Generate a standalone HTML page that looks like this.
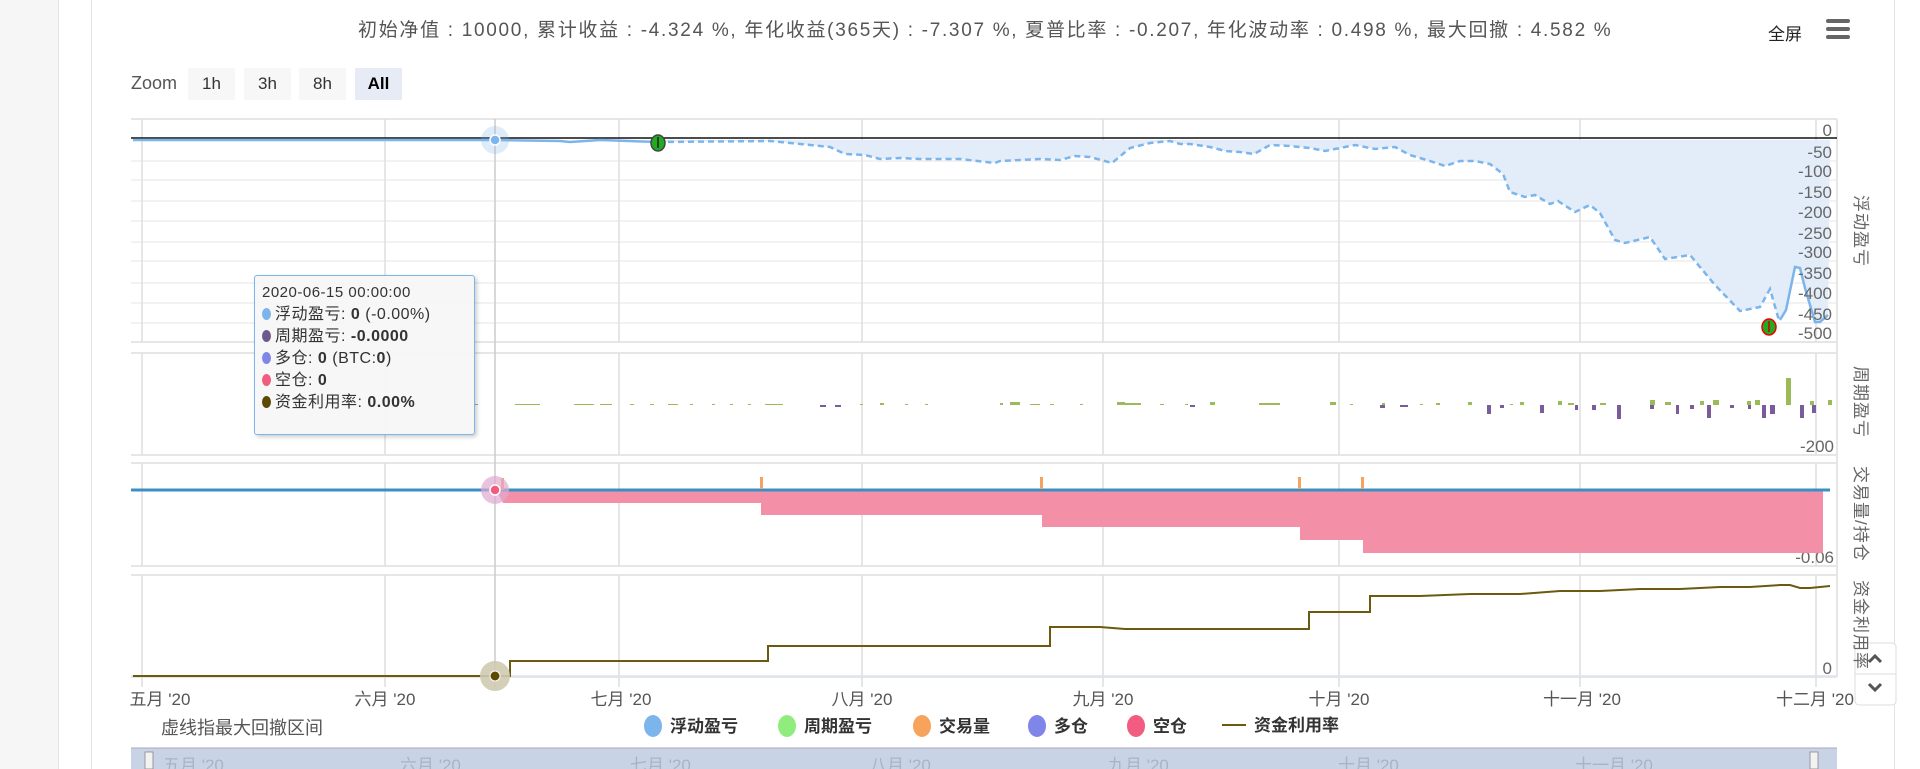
<!DOCTYPE html>
<html><head><meta charset="utf-8"><style>
body{margin:0;width:1920px;height:769px;overflow:hidden;background:#fff;font-family:"Liberation Sans","Noto Sans CJK SC",sans-serif;position:relative}
.abs{position:absolute}
.btn{position:absolute;top:68px;width:47px;height:32px;background:#f7f7f7;font-size:17px;color:#333;text-align:center;line-height:32px}
.vt{position:absolute;writing-mode:vertical-rl;text-orientation:sideways;white-space:nowrap;font-size:17px;color:#666;left:1850px;letter-spacing:1px}
.tt div{height:22px;line-height:22px;white-space:nowrap}
.dot{display:inline-block;width:9px;height:12px;border-radius:50%;margin-right:4px;vertical-align:-1px}
.lg{position:absolute;top:715px;font-size:17px;font-weight:bold;color:#333;line-height:22px}
.lg i{display:inline-block;width:18px;height:22px;border-radius:50%;vertical-align:-5px;margin-right:8px}
</style></head><body>
<div class="abs" style="left:0;top:0;width:58px;height:769px;background:#f6f6f6;border-right:1px solid #e4e4e4"></div>
<div class="abs" style="left:91px;top:0;width:1px;height:769px;background:#e4e4e4"></div>
<div class="abs" style="left:1894px;top:0;width:1px;height:769px;background:#e4e4e4"></div>
<div class="abs" style="left:358px;top:15px;font-size:19px;color:#555;white-space:nowrap;letter-spacing:1.7px">初始净值 : 10000, 累计收益 : -4.324 %, 年化收益(365天) : -7.307 %, 夏普比率 : -0.207, 年化波动率 : 0.498 %, 最大回撤 : 4.582 %</div>
<div class="abs" style="left:1768px;top:20px;font-size:17px;color:#222">全屏</div>
<div class="abs" style="left:1826px;top:19px;width:24px;height:4px;background:#666;border-radius:2px"></div>
<div class="abs" style="left:1826px;top:27px;width:24px;height:4px;background:#666;border-radius:2px"></div>
<div class="abs" style="left:1826px;top:35px;width:24px;height:4px;background:#666;border-radius:2px"></div>
<div class="abs" style="left:131px;top:73px;font-size:18px;color:#555">Zoom</div>
<div class="btn" style="left:188px">1h</div><div class="btn" style="left:244px">3h</div><div class="btn" style="left:299px">8h</div><div class="btn" style="left:355px;background:#e6ebf5;font-weight:bold;color:#000">All</div>

<svg class="abs" style="left:0;top:0" width="1920" height="769">
<g stroke="#e6e6e6" stroke-width="2" fill="none">
<line x1="131" y1="119" x2="1837" y2="119"/><line x1="131" y1="342" x2="1837" y2="342"/>
<line x1="131" y1="353" x2="1837" y2="353"/><line x1="131" y1="455" x2="1837" y2="455"/>
<line x1="131" y1="463" x2="1837" y2="463"/><line x1="131" y1="566" x2="1837" y2="566"/>
<line x1="131" y1="575" x2="1837" y2="575"/><line x1="131" y1="677" x2="1837" y2="677"/>
<line x1="1837" y1="119" x2="1837" y2="677"/>
</g>
<g stroke="#e6e6e6" stroke-width="1">
<line x1="131" y1="161" x2="1837" y2="161"/><line x1="131" y1="180" x2="1837" y2="180"/><line x1="131" y1="201" x2="1837" y2="201"/><line x1="131" y1="221" x2="1837" y2="221"/><line x1="131" y1="242" x2="1837" y2="242"/><line x1="131" y1="261" x2="1837" y2="261"/><line x1="131" y1="283" x2="1837" y2="283"/><line x1="131" y1="303" x2="1837" y2="303"/><line x1="131" y1="323" x2="1837" y2="323"/>
</g>
<g stroke="#dedede" stroke-width="1.5">
<path d="M142 119V342M142 353V455M142 463V566M142 575V687"/>
<path d="M385 119V342M385 353V455M385 463V566M385 575V687"/>
<path d="M619 119V342M619 353V455M619 463V566M619 575V687"/>
<path d="M862 119V342M862 353V455M862 463V566M862 575V687"/>
<path d="M1103 119V342M1103 353V455M1103 463V566M1103 575V687"/>
<path d="M1339 119V342M1339 353V455M1339 463V566M1339 575V687"/>
<path d="M1580 119V342M1580 353V455M1580 463V566M1580 575V687"/>
<path d="M1816 119V342M1816 353V455M1816 463V566M1816 575V687"/>
</g>
<line x1="495" y1="119" x2="495" y2="687" stroke="#ccc" stroke-width="1.5"/>
<path d="M658 140L658 142 770 141 830 147 845 154 865 155 880 159 900 158 920 159 960 159 995 163 1000 161 1040 159 1060 160 1075 156 1090 157 1112 163 1130 148 1150 143 1170 141 1180 144 1190 144 1210 147 1225 151 1240 152 1254 154 1270 145 1290 146 1310 148 1325 151 1340 148 1355 145 1375 149 1395 147 1410 155 1430 161 1445 166 1460 161 1475 161 1490 164 1503 174 1510 192 1525 197 1535 195 1550 204 1558 201 1575 212 1590 205 1600 213 1615 240 1625 243 1650 237 1665 259 1690 255 1715 285 1740 311 1760 307 1770 289 1778 317 1780 320 1786 310 1795 267 1800 268 1805 288 1815 322 1820 322 1828 315 L1830 140Z" fill="#e2edf9"/>
<line x1="131" y1="138" x2="1837" y2="138" stroke="#111" stroke-width="1.5"/>
<path d="M133 140H495 L560 141 570 142 600 140 658 142" stroke="#7cb5ec" stroke-width="2.5" fill="none"/>
<path d="M658 142L770 141 830 147 845 154 865 155 880 159 900 158 920 159 960 159 995 163 1000 161 1040 159 1060 160 1075 156 1090 157 1112 163 1130 148 1150 143 1170 141 1180 144 1190 144 1210 147 1225 151 1240 152 1254 154 1270 145 1290 146 1310 148 1325 151 1340 148 1355 145 1375 149 1395 147 1410 155 1430 161 1445 166 1460 161 1475 161 1490 164 1503 174 1510 192 1525 197 1535 195 1550 204 1558 201 1575 212 1590 205 1600 213 1615 240 1625 243 1650 237 1665 259 1690 255 1715 285 1740 311 1760 307 1770 289 1778 317 1780 320" stroke="#7cb5ec" stroke-width="2.5" fill="none" stroke-dasharray="6,4"/>
<path d="M1780 320L1786 310 1795 267 1800 268 1805 288 1815 322 1820 322 1828 315" stroke="#7cb5ec" stroke-width="2.5" fill="none"/>
<circle cx="495" cy="140" r="14" fill="#7cb5ec" opacity="0.25"/><circle cx="495" cy="140" r="5" fill="#7cb5ec" stroke="#fff" stroke-width="1.5"/>
<ellipse cx="658" cy="143" rx="7" ry="8" fill="#22aa22" stroke="#444" stroke-width="1.5"/><line x1="658" y1="137" x2="658" y2="148" stroke="#222" stroke-width="1.5"/>
<ellipse cx="1769" cy="327" rx="7" ry="8" fill="#22aa22" stroke="#e00" stroke-width="1.5"/><line x1="1769" y1="321" x2="1769" y2="332" stroke="#c00" stroke-width="1.5"/>
<g font-size="17" fill="#666" text-anchor="end" font-family="Liberation Sans">
<text x="1832" y="136">0</text><text x="1832" y="158">-50</text><text x="1832" y="177">-100</text><text x="1832" y="198">-150</text><text x="1832" y="218">-200</text><text x="1832" y="239">-250</text><text x="1832" y="258">-300</text><text x="1832" y="279">-350</text><text x="1832" y="299">-400</text><text x="1832" y="320">-450</text><text x="1832" y="339">-500</text>
<text x="1834" y="452">-200</text><text x="1834" y="563">-0.06</text><text x="1832" y="674">0</text>
</g>
<g fill="#9bbb59">
<path d="M470 404h8v1h-8zM515 404h25v1h-25zM574 404h20v1h-20zM600 404h12v1h-12zM630 404h4v1h-4zM650 404h4v1h-4zM668 404h10v1h-10zM690 404h3v1h-3zM712 404h3v1h-3zM730 404h3v1h-3zM748 404h3v1h-3zM765 404h18v1h-18zM860 404h3v1h-3zM880 403h4v2h-4zM905 404h3v1h-3zM925 404h3v1h-3zM1000 403h3v2h-3zM1010 402h10v3h-10zM1030 404h10v1h-10zM1050 404h4v1h-4zM1080 404h3v1h-3zM1117 402h8v3h-8zM1125 403h16v2h-16zM1160 404h4v1h-4zM1185 404h3v1h-3zM1210 402h5v3h-5zM1259 403h6v2h-6zM1265 403h15v2h-15zM1330 402h6v3h-6zM1350 404h3v1h-3zM1382 403h3v2h-3zM1420 404h3v1h-3zM1436 403h4v2h-4zM1468 402h4v3h-4zM1510 404h3v1h-3zM1520 402h4v3h-4zM1558 401h4v4h-4zM1568 403h6v2h-6zM1600 403h6v2h-6zM1650 400h5v5h-5zM1665 402h6v3h-6zM1700 401h4v4h-4zM1713 400h6v5h-6zM1747 401h4v4h-4zM1755 400h5v5h-5zM1786 378h5v27h-5zM1810 401h4v4h-4zM1828 400h4v5h-4z"/>
</g>
<g fill="#7a5c9a">
<path d="M820 405h6v2h-6zM835 405h6v2h-6zM1190 405h5v2h-5zM1380 405h5v3h-5zM1400 405h8v2h-8zM1487 405h4v9h-4zM1500 405h4v3h-4zM1540 405h4v8h-4zM1575 405h3v5h-3zM1592 405h4v5h-4zM1617 405h4v14h-4zM1650 405h4v4h-4zM1676 405h3v9h-3zM1690 405h4v4h-4zM1707 405h4v13h-4zM1730 405h4v3h-4zM1748 405h3v4h-3zM1762 405h4v13h-4zM1770 405h5v9h-5zM1800 405h4v13h-4zM1812 405h4v8h-4z"/>
</g>
<path d="M497 491H1823V553H1363V540H1300V527H1042V515H761V503H503Z" fill="#f28aa2" opacity="0.95"/>
<line x1="131" y1="490" x2="1830" y2="490" stroke="#3b8fc4" stroke-width="3"/>
<g fill="#f4a460"><rect x="760" y="477" width="3" height="12"/><rect x="1040" y="477" width="3" height="12"/><rect x="1298" y="477" width="3" height="12"/><rect x="1361" y="477" width="3" height="12"/><rect x="501" y="478" width="3" height="12"/></g>
<circle cx="495" cy="490" r="14" fill="#e0a8d0" opacity="0.7"/><circle cx="495" cy="490" r="5" fill="#f15c80" stroke="#fff" stroke-width="1.5"/>
<line x1="131" y1="676" x2="1837" y2="676" stroke="#dde3ef" stroke-width="1.5"/>
<path d="M133 676H510V661H768V646H1050V627H1100L1125 629H1309V612H1370V596H1420L1470 594H1520L1560 591H1600L1640 589H1680L1720 587H1750L1780 585H1790L1800 588H1810L1830 586" stroke="#6b5a10" stroke-width="2" fill="none"/>
<circle cx="495" cy="676" r="15" fill="#cfcab0" opacity="0.9"/><circle cx="495" cy="676" r="5" fill="#5c4a00" stroke="#fff" stroke-width="1"/>
<g font-size="17" fill="#555" text-anchor="middle">
<text x="160" y="705">五月 '20</text><text x="385" y="705">六月 '20</text><text x="621" y="705">七月 '20</text><text x="862" y="705">八月 '20</text><text x="1103" y="705">九月 '20</text><text x="1339" y="705">十月 '20</text><text x="1582" y="705">十一月 '20</text><text x="1815" y="705">十二月 '20</text>
</g>
<rect x="131" y="748" width="1706" height="21" fill="#c8d4e6"/>
<line x1="131" y1="748" x2="1837" y2="748" stroke="#aab" stroke-width="1"/>
<rect x="145" y="752" width="8" height="17" fill="#f2f2f2" stroke="#999"/>
<rect x="1810" y="752" width="8" height="17" fill="#f2f2f2" stroke="#999"/>
<g font-size="17" fill="#aab3c2"><text x="163" y="771">五月 '20</text><text x="400" y="771">六月 '20</text><text x="630" y="771">七月 '20</text><text x="870" y="771">八月 '20</text><text x="1108" y="771">九月 '20</text><text x="1338" y="771">十月 '20</text><text x="1575" y="771">十一月 '20</text></g>
<rect x="1855" y="643" width="41" height="62" rx="4" fill="#fff" stroke="#ddd"/>
<line x1="1855" y1="674" x2="1896" y2="674" stroke="#ddd"/>
<path d="M1869 662l6-6 6 6" stroke="#555" stroke-width="3" fill="none"/>
<path d="M1869 684l6 6 6-6" stroke="#555" stroke-width="3" fill="none"/>
</svg>
<div class="vt" style="top:195px">浮动盈亏</div>
<div class="vt" style="top:366px">周期盈亏</div>
<div class="vt" style="top:466px">交易量/持仓</div>
<div class="vt" style="top:580px">资金利用率</div>
<div class="abs" style="left:161px;top:714px;font-size:18px;color:#555">虚线指最大回撤区间</div>
<div class="lg" style="left:644px"><i style="background:#7cb5ec"></i>浮动盈亏</div>
<div class="lg" style="left:778px"><i style="background:#90ed7d"></i>周期盈亏</div>
<div class="lg" style="left:913px"><i style="background:#f7a35c"></i>交易量</div>
<div class="lg" style="left:1028px"><i style="background:#8085e9"></i>多仓</div>
<div class="lg" style="left:1127px"><i style="background:#f15c80"></i>空仓</div>
<div class="lg" style="left:1222px"><span style="display:inline-block;width:24px;height:2px;background:#6b5a10;vertical-align:5px;margin-right:8px"></span>资金利用率</div>
<div class="abs tt" style="left:254px;top:275px;width:205px;height:146px;padding:6px 7px;background:rgba(247,247,247,0.95);border:1.5px solid #7cb5ec;border-radius:3px;box-shadow:2px 2px 4px rgba(0,0,0,0.2);font-size:16px;color:#333;letter-spacing:0.5px">
<div style="font-size:15px">2020-06-15 00:00:00</div>
<div><span class="dot" style="background:#7cb5ec"></span>浮动盈亏: <b>0</b> (-0.00%)</div>
<div><span class="dot" style="background:#6e5a8a"></span>周期盈亏: <b>-0.0000</b></div>
<div><span class="dot" style="background:#8085e9"></span>多仓: <b>0</b> (BTC:<b>0</b>)</div>
<div><span class="dot" style="background:#f15c80"></span>空仓: <b>0</b></div>
<div><span class="dot" style="background:#5c4a00"></span>资金利用率: <b>0.00%</b></div>
</div>
</body></html>
